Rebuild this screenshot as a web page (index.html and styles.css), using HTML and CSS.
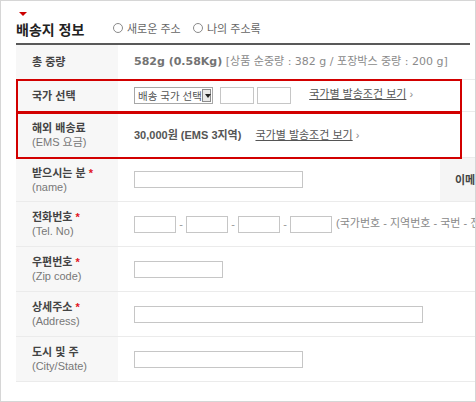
FILE: index.html
```html
<!DOCTYPE html>
<html>
<head>
    <meta charset="utf-8">
    <title>배송지 정보</title>
    <link rel="stylesheet" href="styles.css">
</head>
<body>
<div class="frame">
    <div class="tit">
        <i class="tri"></i>
        <div class="tit-row">
            <h2>배송지 정보</h2>
            <label class="radio"><i class="circle"></i>새로운 주소</label>
            <label class="radio"><i class="circle"></i>나의 주소록</label>
        </div>
    </div>

    <table class="form">
        <colgroup>
            <col class="c-label">
            <col class="c-field">
            <col class="c-label2">
            <col class="c-field2">
        </colgroup>
        <tr class="r-short">
            <th>총 중량</th>
            <td colspan="3" class="wide">
                <b class="weight">582g (0.58Kg)</b>
                <span class="gray">[상품 순중량 : 382 g / 포장박스 중량 : 200 g]</span>
            </td>
        </tr>
        <tr class="r-country">
            <th>국가 선택</th>
            <td colspan="3">
                <span class="select">배송 국가 선택<i class="arrow"></i></span>
                <input type="text" class="ipt w34 first">
                <input type="text" class="ipt w34">
                <a class="link first-link" href="#">국가별 발송조건 보기</a><span class="gt">›</span>
            </td>
        </tr>
        <tr class="r-fee">
            <th>해외 배송료<br><span class="sub">(EMS 요금)</span></th>
            <td colspan="3">
                <b class="fee">30,000원 (EMS 3지역)</b>
                <a class="link" href="#">국가별 발송조건 보기</a><span class="gt">›</span>
            </td>
        </tr>
        <tr class="r-tall r-name">
            <th>받으시는 분 <em>*</em><br><span class="sub">(name)</span></th>
            <td><input type="text" class="ipt w169"></td>
            <th class="th2">이메일</th>
            <td><input type="text" class="ipt w169"></td>
        </tr>
        <tr class="r-tall">
            <th>전화번호 <em>*</em><br><span class="sub">(Tel. No)</span></th>
            <td colspan="3">
                <input type="text" class="ipt w42"><span class="dash">-</span><input type="text" class="ipt w42"><span class="dash">-</span><input type="text" class="ipt w42"><span class="dash">-</span><input type="text" class="ipt w42">
                <span class="gray hint">(국가번호 - 지역번호 - 국번 - 전화번호)</span>
            </td>
        </tr>
        <tr class="r-tall">
            <th>우편번호 <em>*</em><br><span class="sub">(Zip code)</span></th>
            <td colspan="3"><input type="text" class="ipt w89"></td>
        </tr>
        <tr class="r-tall">
            <th>상세주소 <em>*</em><br><span class="sub">(Address)</span></th>
            <td colspan="3"><input type="text" class="ipt w289"></td>
        </tr>
        <tr class="r-tall">
            <th>도시 및 주<br><span class="sub">(City/State)</span></th>
            <td colspan="3"><input type="text" class="ipt w169"></td>
        </tr>
    </table>

    <!-- 강조 표시 -->
    <div class="mark mark-1"></div>
    <div class="mark mark-2"></div>
</div>
</body>
</html>
```

FILE: styles.css
```css
body {
    margin: 0;
    font-family: 'Liberation Sans', 'Noto Sans CJK KR', sans-serif;
    font-size: 11px;
    color: #666666;
}

.frame {
    position: relative;
    width: 459px;
    height: 400px;
    padding-left: 15px;
    border: 1px solid #d6d6d6;
    overflow: hidden;
    background: #ffffff;
}

.tit {
    width: 454px;
    padding-bottom: 4px;
    border-bottom: 2px solid #595959;
}

.tit .tri {
    display: block;
    width: 0;
    height: 0;
    margin: 11px 0 0 3px;
    border-left: 4px solid transparent;
    border-right: 4px solid transparent;
    border-top: 4px solid #cc0000;
}

.tit-row {
    display: flex;
    align-items: center;
    height: 20px;
    margin-top: 3px;
}

.tit-row h2 {
    width: 97px;
    margin: 0;
    font-size: 14px;
    font-weight: bold;
    color: #222222;
    white-space: nowrap;
}

.radio {
    display: flex;
    align-items: center;
    width: 80px;
    margin-top: -2px;
    color: #666666;
}

.radio .circle {
    display: inline-block;
    width: 8px;
    height: 8px;
    margin-right: 4px;
    border: 1px solid #8a8a8a;
    border-radius: 50%;
    background: #ffffff;
}

.form {
    width: 680px;
    border-collapse: collapse;
    table-layout: fixed;
    font-size: 11px;
}

.form .c-label {
    width: 102px;
}

.form .c-field {
    width: 322px;
}

.form .c-label2 {
    width: 100px;
}

.form th,
.form td {
    padding: 0;
    border-bottom: 1px solid #ebebeb;
    vertical-align: middle;
    line-height: 14px;
    white-space: nowrap;
}

.form th {
    padding-left: 16px;
    background: #f7f7f7;
    text-align: left;
    font-weight: bold;
    color: #444444;
}

.form td {
    padding-left: 16px;
}

.form td.wide {
    font-family: 'DejaVu Sans', 'Noto Sans CJK KR', sans-serif;
}

.form .th2 {
    padding-left: 15px;
    background: #f5f5f5;
}

.form .r-short th {
    height: 34px;
}

.form .r-country th {
    height: 31px;
}

.form .r-fee th {
    height: 45px;
}

.form .r-tall th {
    height: 44px;
}

.form .r-name th {
    height: 43px;
}

.form th em {
    font-style: normal;
    color: #e0141e;
}

.form th .sub {
    font-weight: normal;
    color: #777777;
}

.weight {
    color: #737373;
}

.fee {
    color: #555555;
}

.gray {
    color: #8a8a8a;
}

.hint {
    margin-left: 1px;
}

.select {
    display: inline-flex;
    align-items: center;
    justify-content: space-between;
    box-sizing: border-box;
    width: 79px;
    height: 17px;
    padding: 0 1px 0 3px;
    border: 1px solid #a7a7a7;
    vertical-align: middle;
    color: #555555;
    font-size: 10.5px;
}

.select .arrow {
    position: relative;
    display: inline-block;
    box-sizing: border-box;
    width: 13px;
    height: 13px;
    border: 1px solid #8c8c8c;
    background: #e9e9e9;
}

.select .arrow:after {
    content: "";
    position: absolute;
    left: 2px;
    top: 4px;
    border-left: 3.5px solid transparent;
    border-right: 3.5px solid transparent;
    border-top: 4px solid #222222;
}

.ipt {
    box-sizing: border-box;
    height: 17px;
    margin: 0;
    padding: 0;
    border: 1px solid #c6c6c6;
    vertical-align: middle;
    background: #ffffff;
}

.ipt.first {
    margin-left: 4px;
}

.w34 {
    width: 34px;
}

.w42 {
    width: 42px;
}

.w89 {
    width: 89px;
}

.w169 {
    width: 169px;
}

.w289 {
    width: 289px;
}

.dash {
    display: inline-block;
    width: 10px;
    text-align: center;
    vertical-align: middle;
    color: #999999;
}

.link {
    margin-left: 11px;
    color: #555555;
    text-decoration: underline;
}

.first-link {
    margin-left: 15px;
}

.gt {
    margin-left: 3px;
    color: #888888;
}

.mark {
    position: absolute;
    left: 15px;
    box-sizing: border-box;
    width: 446px;
    border: 2px solid #d20000;
}

.mark-1 {
    top: 78px;
    height: 35px;
}

.mark-2 {
    top: 110px;
    height: 48px;
}
```
